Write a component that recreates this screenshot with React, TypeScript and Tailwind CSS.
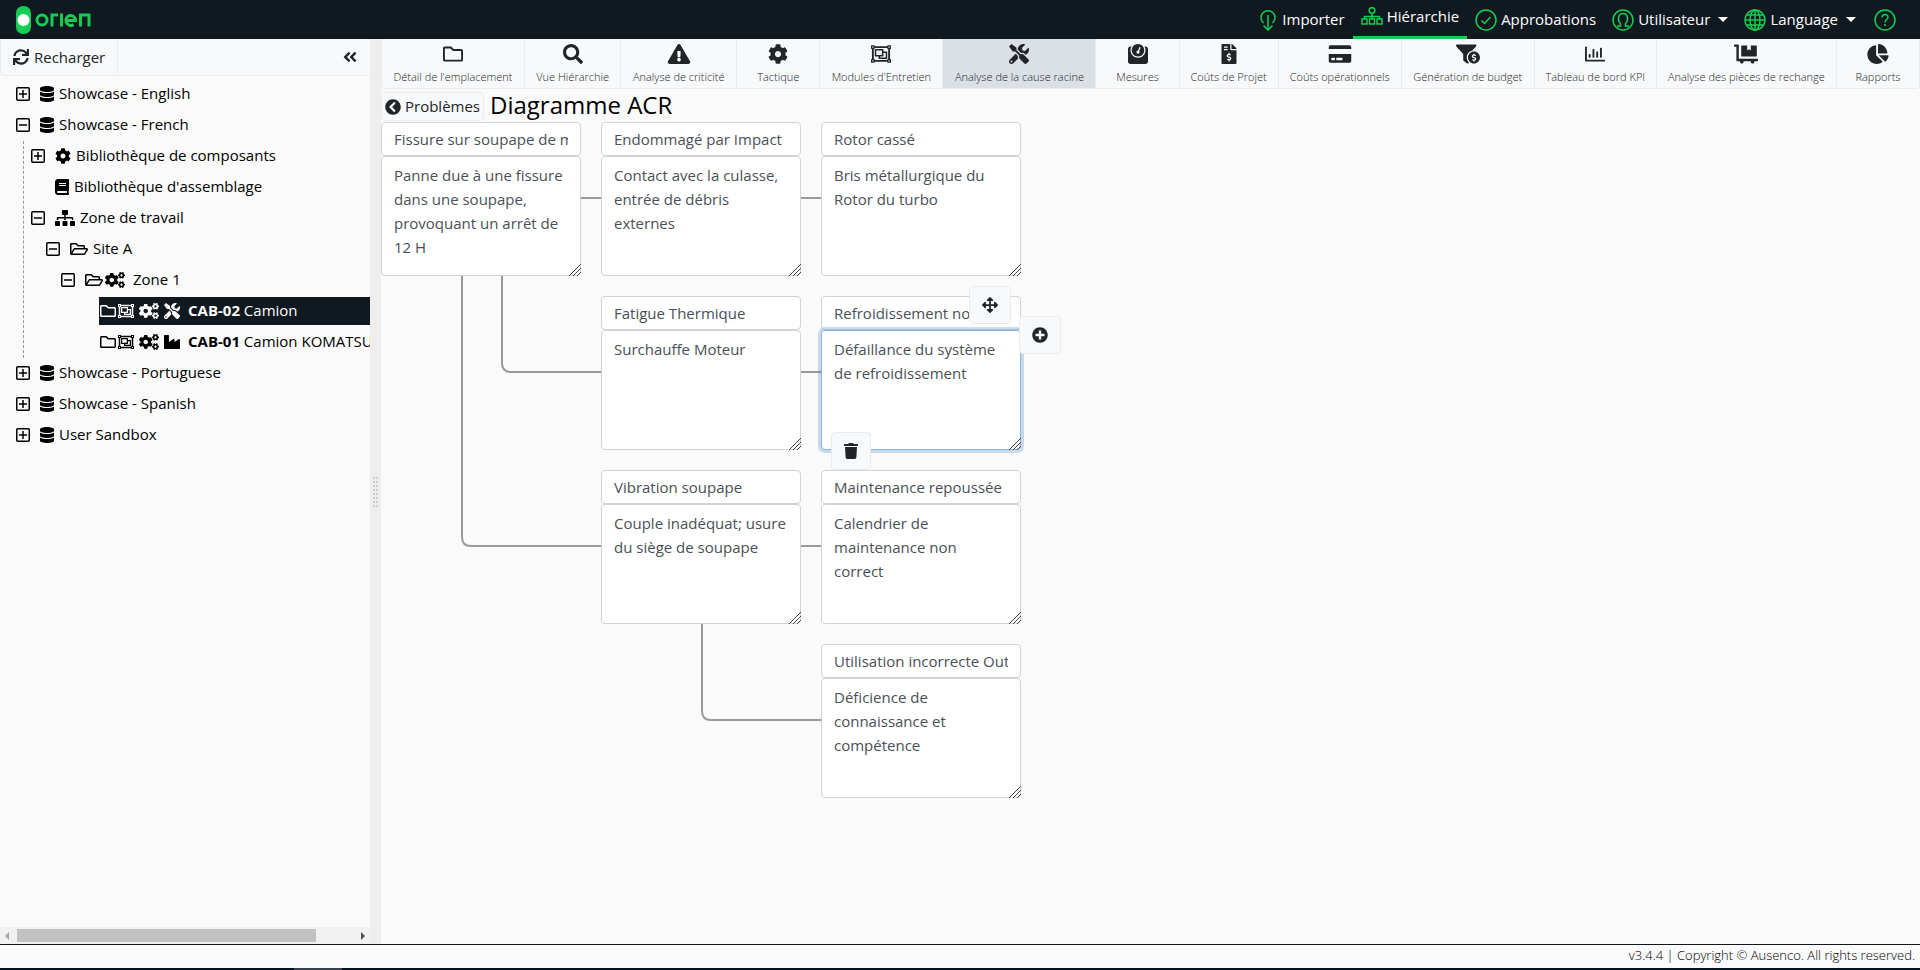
import type { ReactNode } from 'react';
import {
    FaAngleDoubleLeft,
    FaArrowsAlt,
    FaBook,
    FaChartPie,
    FaChevronCircleLeft,
    FaCog,
    FaCogs,
    FaCreditCard,
    FaDatabase,
    FaDollyFlatbed,
    FaExclamationTriangle,
    FaFileInvoiceDollar,
    FaFunnelDollar,
    FaIndustry,
    FaPlusCircle,
    FaRegChartBar,
    FaRegFolder,
    FaRegFolderOpen,
    FaRegObjectGroup,
    FaSearch,
    FaSitemap,
    FaSync,
    FaTools,
    FaTrash,
    FaWeight,
} from 'react-icons/fa';

/* ---------- header ---------- */

function Logo() {
    return (
        <a href="#" aria-label="orien" className="flex items-center">
            <svg width="76" height="28" viewBox="0 0 76 28" fill="none">
                <rect x="0" y="0" width="15" height="28" rx="7" fill="#13ce52" />
                <circle cx="7.500" cy="14" r="6" fill="#fff" />
                <g stroke="#13ce52" strokeWidth="3">
                    <circle cx="26" cy="14" r="5" />
                    <path d="M36 20.500V9H42" />
                    <path d="M45.500 7.500V20.500" />
                    <path d="M50.500 14.500H59.500A4.800 5 0 1 0 57.500 18.500" />
                    <path d="M64.500 20.500V9H73V20.500" />
                </g>
            </svg>
        </a>
    );
}

function LineIcon({ width = 22, height = 22, children }: { width?: number; height?: number; children: ReactNode }) {
    return (
        <svg
            width={width}
            height={height}
            viewBox={`0 0 ${width} ${height}`}
            fill="none"
            stroke="#13ce52"
            strokeWidth="1.500"
            className="shrink-0"
        >
            {children}
        </svg>
    );
}

function Caret() {
    return <span className="ml-1 border-x-5 border-t-5 border-x-transparent border-t-white" />;
}

function Header() {
    return (
        <header className="flex h-[39px] shrink-0 items-center justify-between bg-[#101820] pr-6 pl-4 text-[15px] font-medium text-white">
            <Logo />
            <nav className="flex h-full items-center">
                <a href="#" className="mr-2 flex items-center gap-[6px]">
                    <LineIcon width={16}>
                        <path d="M3.500 14A7 7 0 1 1 12.500 14M8 6V21M3.500 16.500L8 21L12.500 16.500" />
                    </LineIcon>
                    Importer
                </a>
                <a href="#" className="mr-2 flex h-full items-center gap-1 border-b-3 border-[#13ce52] px-2 pb-1">
                    <LineIcon height={18}>
                        <circle cx="11" cy="3.500" r="2.800" />
                        <path d="M11 6.500V12M3.500 12V9.500H18.500V12M1 12H6V17H1ZM8.500 12H13.500V17H8.500ZM16 12H21V17H16Z" />
                    </LineIcon>
                    Hiérarchie
                </a>
                <a href="#" className="mr-4 flex items-center gap-1">
                    <LineIcon>
                        <circle cx="11" cy="11" r="10" />
                        <path d="M6.500 11.500L9.500 14.500L15.500 8" />
                    </LineIcon>
                    Approbations
                </a>
                <button className="mr-4 flex items-center gap-1">
                    <LineIcon>
                        <circle cx="11" cy="11" r="10" />
                        <path d="M5 17H8.500V14.500C5.500 12 5.500 4.500 11 4.500S16.500 12 13.500 14.500V17H17" />
                    </LineIcon>
                    Utilisateur
                    <Caret />
                </button>
                <button className="mr-[18px] flex items-center gap-1">
                    <LineIcon>
                        <circle cx="11" cy="11" r="10" />
                        <ellipse cx="11" cy="11" rx="5" ry="10" />
                        <path d="M11 1V21M1 11H21M2.500 6H19.500M2.500 16H19.500" />
                    </LineIcon>
                    Language
                    <Caret />
                </button>
                <button aria-label="Aide">
                    <LineIcon>
                        <circle cx="11" cy="11" r="10" />
                        <path d="M8 8.500C8 4.500 14 4.500 14 8.300C14 10.500 11 10.500 11 13.500M11 15V17" />
                    </LineIcon>
                </button>
            </nav>
        </header>
    );
}

/* ---------- sidebar ---------- */

function Expander({ open }: { open: boolean }) {
    return (
        <button aria-label={open ? 'Réduire' : 'Développer'} className="mr-[10px] shrink-0">
            <svg width="14" height="14" viewBox="0 0 14 14" fill="none" stroke="#000">
                <rect x="0.750" y="0.750" width="12.500" height="12.500" rx="1" strokeWidth="1.500" />
                <path d={open ? 'M3 7H11' : 'M3 7H11M7 3V11'} strokeWidth="1.500" />
            </svg>
        </button>
    );
}

interface TreeRowProps {
    indent: string;
    open?: boolean;
    selected?: boolean;
    icon: ReactNode;
    children: ReactNode;
}

function TreeRow({ indent, open, selected, icon, children }: TreeRowProps) {
    return (
        <li className={`flex h-[31px] items-center ${indent}`}>
            {open !== undefined && <Expander open={open} />}
            <div
                className={`flex h-7 grow items-center gap-[5px] whitespace-nowrap ${selected ? 'bg-[#101820] text-white' : ''}`}
            >
                {icon}
                <span>{children}</span>
            </div>
        </li>
    );
}

// the glyphs share a height but not a width
const narrow = 'h-4 w-[14px] shrink-0';
const square = 'h-4 w-4 shrink-0';
const wide = 'h-4 w-[18px] shrink-0';
const extraWide = 'h-4 w-5 shrink-0';

function EquipmentIcons({ last }: { last: ReactNode }) {
    return (
        <span className="mr-[3px] ml-px flex items-center gap-[5px]">
            <span className="flex gap-[2px]">
                <FaRegFolder className={square} />
                <FaRegObjectGroup className={square} />
            </span>
            <FaCogs className={extraWide} />
            {last}
        </span>
    );
}

function Sidebar() {
    return (
        <aside className="flex w-[370px] shrink-0 flex-col">
            <div className="flex h-[37px] shrink-0 rounded-b border-b border-[#e9ecef] bg-[#f8f9fa] text-[#212529]">
                <button className="flex items-center gap-[5px] rounded-b border-x border-[#e9ecef] px-3 text-[15px]">
                    <FaSync className={square} />
                    Recharger
                </button>
                <button aria-label="Fermer le panneau" className="ml-auto px-3">
                    <FaAngleDoubleLeft size={16} />
                </button>
            </div>
            <div className="relative grow overflow-hidden pt-[2px]">
                <ul className="text-[15px] text-black">
                    <TreeRow indent="pl-4" open={false} icon={<FaDatabase className={narrow} />}>
                        Showcase - English
                    </TreeRow>
                    <TreeRow indent="pl-4" open icon={<FaDatabase className={narrow} />}>
                        Showcase - French
                    </TreeRow>
                    <TreeRow indent="pl-[31px]" open={false} icon={<FaCog className={square} />}>
                        Bibliothèque de composants
                    </TreeRow>
                    <TreeRow indent="pl-[55px]" icon={<FaBook className={narrow} />}>
                        Bibliothèque d'assemblage
                    </TreeRow>
                    <TreeRow indent="pl-[31px]" open icon={<FaSitemap className={extraWide} />}>
                        Zone de travail
                    </TreeRow>
                    <TreeRow indent="pl-[46px]" open icon={<FaRegFolderOpen className={wide} />}>
                        Site A
                    </TreeRow>
                    <TreeRow
                        indent="pl-[61px]"
                        open
                        icon={
                            <span className="mr-[3px] flex gap-[2px]">
                                <FaRegFolderOpen className={wide} />
                                <FaCogs className={extraWide} />
                            </span>
                        }
                    >
                        Zone 1
                    </TreeRow>
                    <TreeRow
                        indent="pl-[99px]"
                        selected
                        icon={<EquipmentIcons last={<FaTools className={square} />} />}
                    >
                        <b>CAB-02</b> Camion
                    </TreeRow>
                    <TreeRow indent="pl-[99px]" icon={<EquipmentIcons last={<FaIndustry className={square} />} />}>
                        <b>CAB-01</b> Camion KOMATSU
                    </TreeRow>
                    <TreeRow indent="pl-4" open={false} icon={<FaDatabase className={narrow} />}>
                        Showcase - Portuguese
                    </TreeRow>
                    <TreeRow indent="pl-4" open={false} icon={<FaDatabase className={narrow} />}>
                        Showcase - Spanish
                    </TreeRow>
                    <TreeRow indent="pl-4" open={false} icon={<FaDatabase className={narrow} />}>
                        User Sandbox
                    </TreeRow>
                </ul>
                <div className="absolute top-[65px] left-[23px] h-[217px] border-l border-dashed border-[#999]" />
            </div>
            <div className="flex h-[17px] shrink-0 items-center bg-[#f1f1f1] px-[5px]">
                <span className="border-y-4 border-r-4 border-y-transparent border-r-[#a3a3a3]" />
                <div className="mx-2 h-[13px] grow">
                    <div className="h-full w-[89%] bg-[#c1c1c1]" />
                </div>
                <span className="border-y-4 border-l-4 border-y-transparent border-l-[#505050]" />
            </div>
        </aside>
    );
}

function Splitter() {
    return (
        <div className="flex w-[11px] shrink-0 items-center justify-center bg-[#eee]">
            <div className="grid grid-cols-2 gap-x-px gap-y-[2px]">
                {[...Array(16)].map((_, i) => (
                    <span key={i} className="size-[2px] bg-[#ccc]" />
                ))}
            </div>
        </div>
    );
}

/* ---------- tabs ---------- */

const tabs = [
    { label: "Détail de l'emplacement", icon: FaRegFolder, size: 'basis-[143px]' },
    { label: 'Vue Hiérarchie', icon: FaSearch, size: 'basis-[96px]' },
    { label: 'Analyse de criticité', icon: FaExclamationTriangle, size: 'basis-[116px]' },
    { label: 'Tactique', icon: FaCog, size: 'basis-[83px]' },
    { label: "Modules d'Entretien", icon: FaRegObjectGroup, size: 'basis-[123px]' },
    { label: 'Analyse de la cause racine', icon: FaTools, size: 'basis-[153px]', active: true },
    { label: 'Mesures', icon: FaWeight, size: 'basis-[83px]' },
    { label: 'Coûts de Projet', icon: FaFileInvoiceDollar, size: 'basis-[99px]' },
    { label: 'Coûts opérationnels', icon: FaCreditCard, size: 'basis-[123px]' },
    { label: 'Génération de budget', icon: FaFunnelDollar, size: 'basis-[133px]' },
    { label: 'Tableau de bord KPI', icon: FaRegChartBar, size: 'basis-[122px]' },
    { label: 'Analyse des pièces de rechange', icon: FaDollyFlatbed, size: 'basis-[180px]' },
    { label: 'Rapports', icon: FaChartPie, size: 'basis-[83px]' },
];

function Tabs() {
    return (
        <nav className="flex h-[50px] shrink-0 rounded-b border-b border-l border-[#e9ecef] bg-[#f8f9fa] text-[#212529]">
            {tabs.map(({ label, icon: Icon, size, active }) => (
                <button
                    key={label}
                    className={`flex grow flex-col items-center border-r border-[#e9ecef] pt-[5px] text-[11px] leading-4 font-light whitespace-nowrap ${size} ${active ? 'bg-[#dae0e5]' : ''}`}
                >
                    <Icon className="h-5 w-6" />
                    <span className="mt-[5px]">{label}</span>
                </button>
            ))}
        </nav>
    );
}

/* ---------- diagram ---------- */

interface CauseCardProps {
    title: string;
    text: string;
    place: string;
    focused?: boolean;
}

function CauseCard({ title, text, place, focused }: CauseCardProps) {
    return (
        <div className={`relative flex flex-col ${place}`}>
            <input
                aria-label="Titre de la cause"
                defaultValue={title}
                className="h-[34px] rounded border border-[#ced4da] bg-white px-3 text-[15px] text-[#495057]"
            />
            <textarea
                aria-label={`Description : ${title}`}
                defaultValue={text}
                className={`h-[120px] resize-none overflow-hidden rounded border bg-white px-3 py-[6px] text-[15px] leading-6 text-[#495057] outline-none ${
                    focused ? 'z-10 border-[#86b7e0] ring-3 ring-[#337ab7]/25' : 'border-[#ced4da]'
                }`}
            />
            <svg width="12" height="12" viewBox="0 0 12 12" stroke="#444" className="absolute right-0 bottom-0 z-10">
                <path d="M0 12L12 0M4 12L12 4M8 12L12 8" />
            </svg>
            {focused && (
                <>
                    <CardButton label="Déplacer" place="-top-[10px] right-[10px] w-[42px]">
                        <FaArrowsAlt size={16} />
                    </CardButton>
                    <CardButton label="Ajouter" place="top-5 left-[198px] w-[42px]">
                        <FaPlusCircle size={16} />
                    </CardButton>
                    <CardButton label="Supprimer" place="-bottom-5 left-[10px] w-10">
                        <FaTrash size={16} />
                    </CardButton>
                </>
            )}
        </div>
    );
}

function CardButton({ label, place, children }: { label: string; place: string; children: ReactNode }) {
    return (
        <button
            aria-label={label}
            className={`absolute z-20 flex h-[38px] items-center justify-center rounded border border-[#e9ecef] bg-[#f8f9fa] text-[#212529] ${place}`}
        >
            {children}
        </button>
    );
}

function Diagram() {
    return (
        <div className="relative grid grid-cols-[200px_200px_200px] gap-5">
            <svg
                width="640"
                height="676"
                viewBox="0 0 640 676"
                fill="none"
                stroke="#999"
                strokeWidth="2"
                className="absolute top-0 left-0"
            >
                <path d="M200 76H220M420 76H440M420 250H440M420 424H440" />
                <path d="M121 154V241Q121 250 130 250H220" />
                <path d="M81 154V415Q81 424 90 424H220" />
                <path d="M321 502V589Q321 598 330 598H440" />
            </svg>
            <CauseCard
                place="col-start-1"
                title="Fissure sur soupape de moteur"
                text="Panne due à une fissure dans une soupape, provoquant un arrêt de 12 H"
            />
            <CauseCard
                place="col-start-2"
                title="Endommagé par Impact"
                text="Contact avec la culasse, entrée de débris externes"
            />
            <CauseCard place="col-start-3" title="Rotor cassé" text="Bris métallurgique du Rotor du turbo" />
            <CauseCard place="col-start-2" title="Fatigue Thermique" text="Surchauffe Moteur" />
            <CauseCard
                place="col-start-3"
                title="Refroidissement non conforme"
                text="Défaillance du système de refroidissement"
                focused
            />
            <CauseCard
                place="col-start-2"
                title="Vibration soupape"
                text="Couple inadéquat; usure du siège de soupape"
            />
            <CauseCard
                place="col-start-3"
                title="Maintenance repoussée"
                text="Calendrier de maintenance non correct"
            />
            <CauseCard
                place="col-start-3"
                title="Utilisation incorrecte Outils"
                text="Déficience de connaissance et compétence"
            />
        </div>
    );
}

export default function App() {
    return (
        <div className="flex h-screen flex-col overflow-hidden bg-[#fafafa] font-['Open_Sans',sans-serif]">
            <Header />
            <div className="flex min-h-0 grow">
                <Sidebar />
                <Splitter />
                <main className="min-w-0 grow overflow-hidden">
                    <Tabs />
                    <div className="flex h-[33px] items-start gap-[6px]">
                        <button className="mt-[3px] flex h-[29px] items-center gap-1 rounded border border-[#e9ecef] bg-[#f8f9fa] px-[3px] text-[15px] text-[#212529]">
                            <FaChevronCircleLeft size={16} />
                            Problèmes
                        </button>
                        <h1 className="text-[24px] leading-8 font-medium text-black">Diagramme ACR</h1>
                    </div>
                    <Diagram />
                </main>
            </div>
            <footer className="h-6 shrink-0 border-t border-[#101820] pr-[5px] text-right text-[13px] leading-5 font-light text-black">
                v3.4.4 | Copyright © Ausenco. All rights reserved.
            </footer>
            <div className="h-[2px] shrink-0 bg-[#041420] pl-[294px]">
                <div className="h-full w-12 bg-[#36424c]" />
            </div>
        </div>
    );
}
